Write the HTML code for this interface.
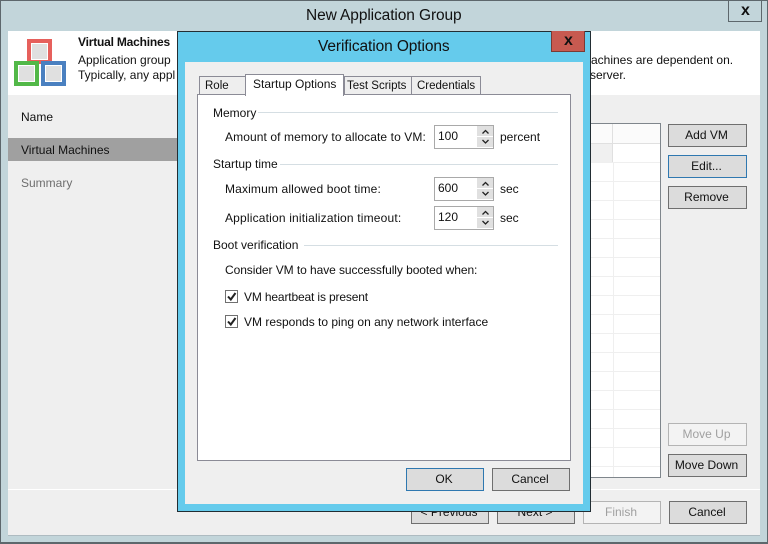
<!DOCTYPE html>
<html><head><meta charset="utf-8">
<style>
html,body{margin:0;padding:0;width:768px;height:544px;overflow:hidden;background:#c2d5da}
*{box-sizing:border-box}
div,span.t{position:absolute}
.t{position:absolute;white-space:nowrap;font:12px/16px "Liberation Sans",sans-serif;color:#111}
.b{position:absolute;width:79px;height:23px;background:#dcdcdc;border:1px solid #6f6f6f;text-align:center;font:12px/21px "Liberation Sans",sans-serif;color:#111;white-space:nowrap;padding-right:2px}
.w{width:78px}
.d{background:#f3f3f3;border-color:#b4b4b4;color:#a0a0a0}
.f{border-color:#2f78b0}
.tab{background:#eee;border:1px solid #8b8b96;border-bottom:none;text-align:left;font:11.5px/19px "Liberation Sans",sans-serif;color:#111;white-space:nowrap}
.l{height:1px;background:#d5dee3}
.spin{width:60px;height:24px;background:#fff;border:1px solid #a9a9a9;font:12px/20px "Liberation Sans",sans-serif;color:#111;padding-left:3px}
.u,.v{left:42px;width:16px;height:10px;background:#e0e0e0}
.u{top:0}.v{top:11px}
svg{position:absolute;overflow:visible}
</style></head><body>
<div style="left:0;top:0;width:768px;height:544px;border:1px solid #5d676c;border-width:1px 1px 2px 1px"></div>
<div style="left:8px;top:31px;width:752px;height:505px;background:#efefef;border-bottom:1px solid #aebbc1"></div>
<div style="left:8px;top:31px;width:752px;height:64px;background:#fff"></div>
<span class="t" style="left:306px;top:6px;font-size:15.500px;line-height:20px;letter-spacing:-.1px">New Application Group</span>
<div style="left:728px;top:0;width:34px;height:22px;border:1px solid #5d676c;border-top:none"></div>
<span class="t" style="left:741px;top:3px;font:bold 16px/16px 'Liberation Sans',sans-serif;color:#111">x</span>

<div style="left:27px;top:39px;width:25px;height:25px;background:#e0e0e0;border:4px solid #e6605c;box-shadow:inset 0 0 0 1px #fff"></div>
<div style="left:14px;top:61px;width:25px;height:25px;background:#e0e0e0;border:4px solid #52b848;box-shadow:inset 0 0 0 1px #fff"></div>
<div style="left:41px;top:61px;width:25px;height:25px;background:#e0e0e0;border:4px solid #4a80c0;box-shadow:inset 0 0 0 1px #fff"></div>

<span class="t" style="left:78px;top:34px;font-weight:bold;letter-spacing:-.2px">Virtual Machines</span>
<span class="t" style="left:78px;top:52px">Application group</span>
<span class="t" style="left:78px;top:67px">Typically, any appl</span>
<span class="t" style="left:581px;top:52px">machines are dependent on.</span>
<span class="t" style="left:590px;top:67px">server.</span>

<span class="t" style="left:21px;top:109px">Name</span>
<div style="left:8px;top:138px;width:169px;height:23px;background:#a0a0a0"></div>
<span class="t" style="left:21px;top:142px">Virtual Machines</span>
<span class="t" style="left:21px;top:175px;color:#6e6e6e">Summary</span>

<div style="left:560px;top:123px;width:101px;height:355px;background:#fff;border:1px solid #7f868c"></div>
<div style="left:561px;top:124px;width:99px;height:19px;background:#fbfbfb"></div>
<div style="left:561px;top:144px;width:52px;height:18px;background:#f0f0f0"></div>
<svg style="left:0;top:0" width="768" height="544">
<path d="M561 143.500H660" stroke="#e0e0e0"/>
<path d="M612.500 124V143M612.500 144V162" stroke="#e0e0e0"/>
<path d="M613.500 162V477M561 162.500H660M561 181.500H660M561 200.500H660M561 219.500H660M561 238.500H660M561 257.500H660M561 276.500H660M561 295.500H660M561 314.500H660M561 333.500H660M561 352.500H660M561 371.500H660M561 390.500H660M561 409.500H660M561 428.500H660M561 447.500H660M561 466.500H660" stroke="#efefef"/>
</svg>
<div class="b" style="left:668px;top:124px">Add VM</div>
<div class="b f" style="left:668px;top:155px">Edit...</div>
<div class="b" style="left:668px;top:186px">Remove</div>
<div class="b d" style="left:668px;top:423px">Move Up</div>
<div class="b" style="left:668px;top:454px">Move Down</div>
<div style="left:8px;top:489px;width:752px;height:1px;background:#fff"></div>
<div class="b w" style="left:411px;top:501px">&lt; Previous</div>
<div class="b w" style="left:497px;top:501px">Next &gt;</div>
<div class="b w d" style="left:583px;top:501px">Finish</div>
<div class="b w" style="left:669px;top:501px">Cancel</div>

<!-- dialog -->
<div style="left:177px;top:31px;width:414px;height:481px;background:#65cbec;border:1px solid #222d33"></div>
<div style="left:185px;top:62px;width:398px;height:442px;background:#efefef"></div>
<span class="t" style="left:318px;top:37px;font-size:15.500px;line-height:20px;letter-spacing:-.1px">Verification Options</span>
<div style="left:551px;top:31px;width:34px;height:21px;background:#c75a50;border:1px solid #7a3a34;border-top:none"></div>
<span class="t" style="left:564px;top:33px;font:bold 16px/16px 'Liberation Sans',sans-serif;color:#111">x</span>

<div class="tab" style="left:199px;top:76px;width:47px;height:19px;padding-left:5px">Role</div>
<div class="tab" style="left:344px;top:76px;width:68px;height:19px;padding-left:2px">Test Scripts</div>
<div class="tab" style="left:411px;top:76px;width:70px;height:19px;padding-left:5px">Credentials</div>
<div style="left:197px;top:94px;width:374px;height:367px;background:#fff;border:1px solid #8b8b96"></div>
<div class="tab" style="left:245px;top:74px;width:99px;height:22px;background:#fff;line-height:19px;font-size:12px;z-index:2;padding-left:7px">Startup Options</div>

<span class="t" style="left:213px;top:105px">Memory</span>
<div class="l" style="left:258px;top:112px;width:300px"></div>
<span class="t" style="left:225px;top:129px;letter-spacing:.1px">Amount of memory to allocate to VM:</span>
<div class="spin" style="left:434px;top:125px">100<div class="u"></div><div class="v"></div></div>
<span class="t" style="left:500px;top:129px">percent</span>

<span class="t" style="left:213px;top:156px">Startup time</span>
<div class="l" style="left:280px;top:164px;width:278px"></div>
<span class="t" style="left:225px;top:181px;letter-spacing:.15px">Maximum allowed boot time:</span>
<div class="spin" style="left:434px;top:177px">600<div class="u"></div><div class="v"></div></div>
<span class="t" style="left:500px;top:181px">sec</span>
<span class="t" style="left:225px;top:210px;letter-spacing:.18px">Application initialization timeout:</span>
<div class="spin" style="left:434px;top:206px">120<div class="u"></div><div class="v"></div></div>
<span class="t" style="left:500px;top:210px">sec</span>

<span class="t" style="left:213px;top:237px">Boot verification</span>
<div class="l" style="left:304px;top:245px;width:254px"></div>
<span class="t" style="left:225px;top:262px;letter-spacing:-.07px">Consider VM to have successfully booted when:</span>

<div style="left:225px;top:290px;width:13px;height:13px;background:#fff;border:1px solid #707070"></div>
<div style="left:225px;top:315px;width:13px;height:13px;background:#fff;border:1px solid #707070"></div>
<span class="t" style="left:244px;top:289px;letter-spacing:-.15px">VM heartbeat is present</span>
<span class="t" style="left:244px;top:314px">VM responds to ping on any network interface</span>

<svg style="left:0;top:0;z-index:3" width="768" height="544" fill="none">
<path d="M482.500 133.500L485.500 130.500L488.500 133.500M482.500 140L485.500 143L488.500 140" stroke="#222" stroke-width="1.300"/>
<path d="M482.500 185.500L485.500 182.500L488.500 185.500M482.500 192L485.500 195L488.500 192" stroke="#222" stroke-width="1.300"/>
<path d="M482.500 214.500L485.500 211.500L488.500 214.500M482.500 221L485.500 224L488.500 221" stroke="#222" stroke-width="1.300"/>
<path d="M228 296.500L230.800 299.500L235.500 293M228 321.500L230.800 324.500L235.500 318" stroke="#222" stroke-width="2"/>
</svg>

<div class="b w f" style="left:406px;top:468px">OK</div>
<div class="b w" style="left:492px;top:468px">Cancel</div>
</body></html>
